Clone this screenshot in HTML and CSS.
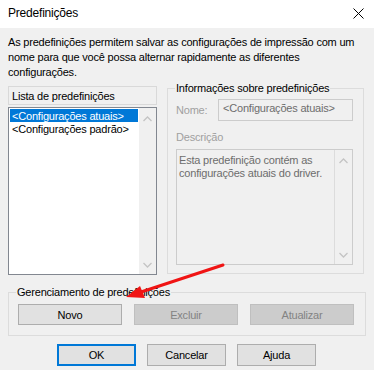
FILE: index.html
```html
<!DOCTYPE html>
<html lang="pt">
<head>
<meta charset="UTF-8">
<meta name="viewport" content="width=device-width, initial-scale=1.0">
<link rel="stylesheet" href="styles.css">
<title>Predefinições</title>
</head>
<body>
<div class="dialog">
  <div class="titlebar">
    <span class="title">Predefinições</span>
    <svg class="close" width="11" height="11" viewBox="0 0 11 11"><path d="M0.5 0.5 L10.5 10.5 M10.5 0.5 L0.5 10.5" stroke="#000" stroke-width="1"/></svg>
  </div>
  <div class="content">
    <p class="intro">As predefinições permitem salvar as configurações de impressão com um<br>nome para que você possa alternar rapidamente as diferentes<br>configurações.</p>

    <div class="panels">
      <div class="list-col">
        <div class="list-header">Lista de predefinições</div>
        <div class="listbox">
          <div class="items">
            <div class="item selected">&lt;Configurações atuais&gt;</div>
            <div class="item">&lt;Configurações padrão&gt;</div>
          </div>
          <div class="scrollbar">
            <svg width="9" height="6" viewBox="0 0 9 6"><polyline points="0.5,5 4.5,1 8.5,5" fill="none" stroke="#c4c4c4" stroke-width="1.3"/></svg>
            <svg width="9" height="6" viewBox="0 0 9 6"><polyline points="0.5,1 4.5,5 8.5,1" fill="none" stroke="#c4c4c4" stroke-width="1.3"/></svg>
          </div>
        </div>
      </div>

      <fieldset class="group info">
        <legend>Informações sobre predefinições</legend>
        <div class="name-row">
          <span class="label">Nome:</span>
          <div class="field">&lt;Configurações atuais&gt;</div>
        </div>
        <div class="label desc-label">Descrição</div>
        <div class="desc">
          <div class="desc-text">Esta predefinição contém as<br>configurações atuais do driver.</div>
          <div class="scrollbar">
            <svg width="9" height="6" viewBox="0 0 9 6"><polyline points="0.5,5 4.5,1 8.5,5" fill="none" stroke="#c4c4c4" stroke-width="1.3"/></svg>
            <svg width="9" height="6" viewBox="0 0 9 6"><polyline points="0.5,1 4.5,5 8.5,1" fill="none" stroke="#c4c4c4" stroke-width="1.3"/></svg>
          </div>
        </div>
      </fieldset>
    </div>

    <fieldset class="group manage">
      <legend>Gerenciamento de predefinições</legend>
      <div class="manage-buttons">
        <button class="btn">Novo</button>
        <button class="btn" disabled>Excluir</button>
        <button class="btn" disabled>Atualizar</button>
      </div>
    </fieldset>

    <div class="footer">
      <button class="btn default">OK</button>
      <button class="btn">Cancelar</button>
      <button class="btn">Ajuda</button>
    </div>
  </div>

  <svg class="arrow" width="374" height="370" viewBox="0 0 374 370">
    <line x1="223" y1="265" x2="138" y2="293" stroke="#f01414" stroke-width="3" stroke-linecap="round"/>
    <polygon points="126,297 140,286 145,298" fill="#f01414"/>
  </svg>
</div>
</body>
</html>
```

FILE: styles.css
```css
body {
  margin: 0;
  font-family: "Liberation Sans", Arial, sans-serif;
  font-size: 11px;
  letter-spacing: -0.2px;
  color: #000;
}
.dialog {
  position: relative;
  width: 374px;
  height: 370px;
  background: #f0f0f0;
  overflow: hidden;
}
.titlebar {
  height: 28px;
  background: #fff;
  display: flex;
  align-items: center;
  justify-content: space-between;
  padding: 0 10px 0 8px;
}
.title {
  font-size: 12px;
  margin-top: -2px;
}
.close {
  margin-top: -2px;
}
.content {
  padding: 0 9px 0 8px;
}
.intro {
  margin: 7px 0 0;
  line-height: 15px;
  white-space: nowrap;
}
.panels {
  display: flex;
  align-items: flex-start;
  gap: 10px;
  margin-top: 1px;
}
.list-col {
  width: 149px;
  margin-top: 5px;
  display: flex;
  flex-direction: column;
  gap: 2px;
}
.list-header {
  height: 17px;
  border: 1px solid #d9d9d9;
  padding-left: 3px;
  line-height: 18px;
}
.listbox {
  height: 166px;
  border: 1px solid #828790;
  background: #fff;
  display: flex;
}
.items {
  flex: 1;
  padding: 1px;
}
.item {
  height: 13px;
  line-height: 14px;
  padding-left: 2px;
  white-space: nowrap;
}
.item.selected {
  background: #0078d7;
  color: #fff;
}
.scrollbar {
  width: 17px;
  background: #f0f0f0;
  display: flex;
  flex-direction: column;
  justify-content: space-between;
  align-items: center;
  padding: 8px 0 6px;
}
.group {
  margin: 0;
  padding: 0;
  border: 1px solid #dcdcdc;
  min-width: 0;
}
.group legend {
  margin-left: 7px;
  padding: 0 1px;
  line-height: 14px;
  white-space: nowrap;
}
.info {
  width: 197px;
  height: 193px;
  padding: 0 10px 0 8px;
  box-sizing: border-box;
}
.info legend {
  margin-left: -1px;
}
.label {
  color: #a0a0a0;
}
.name-row {
  display: flex;
  align-items: center;
  justify-content: space-between;
  margin-top: 4px;
}
.field {
  border: 1px solid #cccccc;
  padding: 2px 0 0 4px;
  box-sizing: border-box;
  width: 135px;
  height: 22px;
  color: #6d6d6d;
  white-space: nowrap;
}
.desc-label {
  margin-top: 10px;
  line-height: 12px;
}
.desc {
  margin-top: 6px;
  height: 116px;
  border: 1px solid #cccccc;
  box-sizing: border-box;
  display: flex;
}
.desc-text {
  flex: 1;
  padding: 4px 0 0 2px;
  line-height: 13px;
  color: #6d6d6d;
  white-space: nowrap;
}
.desc .scrollbar {
  border-left: 1px solid #dcdcdc;
}
.manage {
  margin-top: 10px;
  width: 358px;
  box-sizing: border-box;
  padding: 0 0 10px 9px;
}
.manage legend {
  margin-left: -2px;
}
.manage-buttons {
  display: flex;
  gap: 12px;
  margin-top: 5px;
}
.btn {
  font-family: "Liberation Sans", Arial, sans-serif;
  font-size: 11px;
  letter-spacing: -0.2px;
  color: #000;
  background: #e1e1e1;
  border: 1px solid #adadad;
  padding: 0;
  height: 21px;
}
.manage-buttons .btn {
  width: 104px;
}
.btn:disabled {
  background: #cccccc;
  border-color: #bfbfbf;
  color: #838383;
}
.footer {
  display: flex;
  justify-content: center;
  gap: 11px;
  margin-top: 8px;
}
.footer .btn {
  width: 79px;
  height: 22px;
}
.btn.default {
  border: 2px solid #0078d7;
}
.arrow {
  position: absolute;
  left: 0;
  top: 0;
  pointer-events: none;
}
```
